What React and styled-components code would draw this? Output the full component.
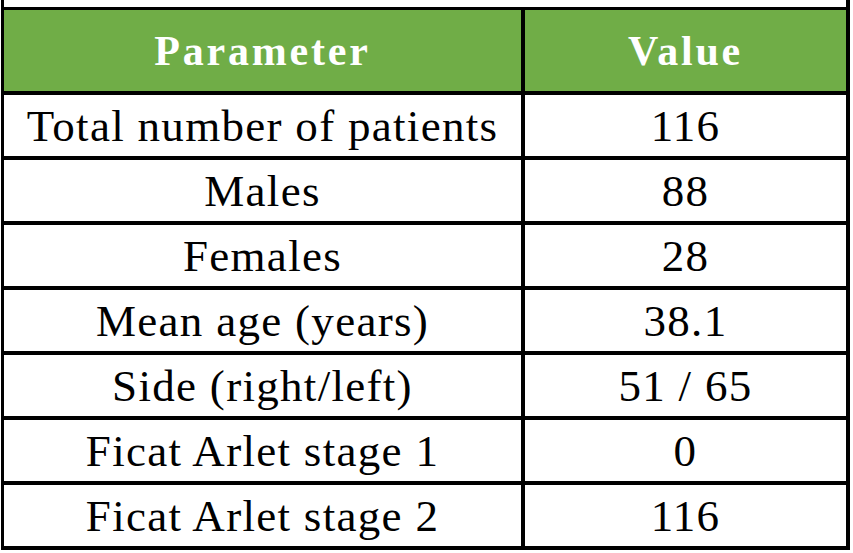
import React from 'react'
import styled, { createGlobalStyle } from 'styled-components'

const rows = [
	['Total number of patients', '116'],
	['Males', '88'],
	['Females', '28'],
	['Mean age (years)', '38.1'],
	['Side (right/left)', '51 / 65'],
	['Ficat Arlet stage 1', '0'],
	['Ficat Arlet stage 2', '116'],
]

function App() {
	return (
		<>
			<GlobalStyle />
			<Page>
				<Table>
					<colgroup>
						<col style={{ width: 524 }} />
						<col style={{ width: 325 }} />
					</colgroup>
					<tbody>
						<CaptionRow>
							<CaptionCell colSpan={2} />
						</CaptionRow>
						<tr>
							<HeadCell first>Parameter</HeadCell>
							<HeadCell>Value</HeadCell>
						</tr>
						{rows.map(([label, value]) => (
							<tr key={label}>
								<Cell first>{label}</Cell>
								<Cell>{value}</Cell>
							</tr>
						))}
					</tbody>
				</Table>
			</Page>
		</>
	)
}

const GlobalStyle = createGlobalStyle`
	html, body {
		margin: 0;
		padding: 0;
		background: #fff;
	}
`

const Page = styled.div`
	padding-left: 1px;
	width: 853px;
	height: 553px;
	overflow: hidden;
	box-sizing: border-box;
	background: #fff;
`

const Table = styled.table`
	border-collapse: separate;
	border-spacing: 0;
	table-layout: fixed;
	width: 848px;
	font-family: 'Liberation Serif', 'Times New Roman', serif;
	color: #000;
`

const CaptionRow = styled.tr`
	height: 7px;
`
const CaptionCell = styled.td`
	padding: 0;
	height: 7px;
	border-left: 3px solid #000;
	border-right: 4px solid #000;
	border-bottom: 3px solid #000;
`

const HeadCell = styled.th`
	box-sizing: content-box;
	height: 81px;
	padding: 0;
	background: #70ad47;
	color: #fff;
	font-weight: 700;
	font-size: 42px;
	letter-spacing: 2.8px;
	text-align: center;
	border-right: 4px solid #000;
	border-bottom: 4px solid #000;
	border-left: ${(p) => (p.first ? '3px solid #000' : 'none')};
`

const Cell = styled.td`
	box-sizing: content-box;
	height: 61px;
	padding: 0;
	font-size: 45px;
	letter-spacing: 1.3px;
	text-align: center;
	white-space: nowrap;
	border-right: 4px solid #000;
	border-bottom: 4px solid #000;
	border-left: ${(p) => (p.first ? '3px solid #000' : 'none')};
`

export default App
